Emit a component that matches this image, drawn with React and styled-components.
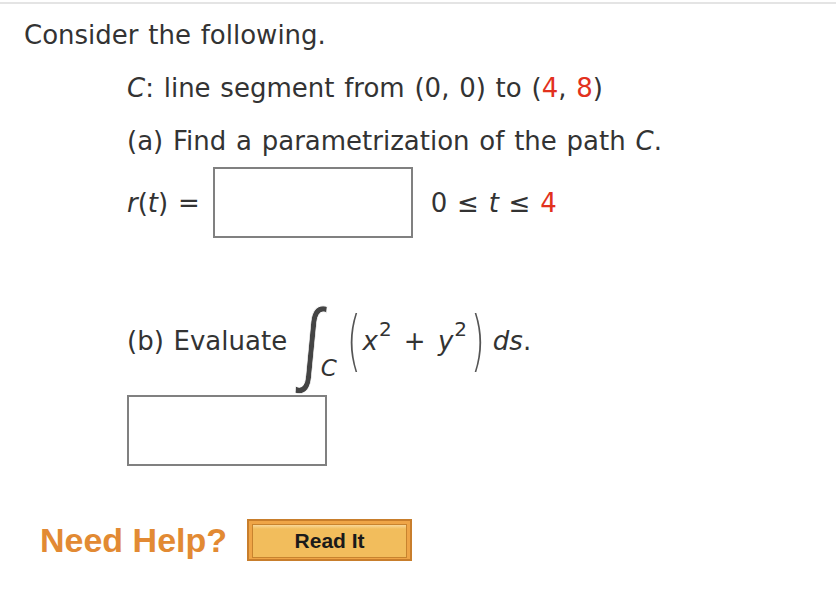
import React from "react"
import styled, { createGlobalStyle } from "styled-components"

const GlobalStyle = createGlobalStyle`
  html, body {
    margin: 0;
    padding: 0;
    background: #fff;
  }
  body {
    font-family: "DejaVu Sans", Verdana, sans-serif;
    color: #333;
  }
`

const Page = styled.div`
  width: 836px;
  height: 606px;
  border-top: 2px solid #e4e4e4;
  margin-top: 2px;
  box-sizing: border-box;
  padding: 16px 0 0 24px;
  font-size: 26px;
  word-spacing: 1.5px;
`

const Intro = styled.div`
  line-height: 30px;
`

const Body = styled.div`
  padding: 0 0 0 103px;
  display: flex;
  flex-direction: column;
  align-items: flex-start;
`

const Line = styled.div`
  line-height: 30px;
  margin-top: ${({ top }) => top}px;
`

const Red = styled.span`
  color: #e2311d;
`

const Var = styled.i`
  font-style: italic;
`

const AnswerRow = styled.div`
  display: flex;
  align-items: center;
  margin-top: 11px;
  gap: 13px;
`

const AnswerBox = styled.div`
  width: 200px;
  height: 71px;
  box-sizing: border-box;
  border: 2px solid #808080;
  background: #fff;
`

const Range = styled.span`
  margin-left: 5px;
`

const EvalRow = styled.div`
  display: flex;
  align-items: center;
  margin-top: 63px;
  height: 80px;
`

const Integral = styled.span`
  display: inline-block;
  font-family: "Liberation Sans", Arial, sans-serif;
  font-size: 64px;
  line-height: 1;
  color: #444;
  -webkit-text-stroke: 0.6px #fff;
  margin: 2px 0 0 16px;
  transform: scale(1, 1.45) skewX(-8deg);
`

const Sub = styled.span`
  align-self: flex-end;
  font-size: 23px;
  line-height: 1;
  margin: 0 8px 1px 0;
`

const Paren = styled.span`
  display: inline-block;
  font-size: 66px;
  font-weight: 200;
  line-height: 1;
  color: #555;
  transform: scaleX(0.55);
  margin: 0 -4px;
`

const Sup = styled.sup`
  font-size: 20px;
  vertical-align: 14px;
  line-height: 0;
  margin-left: 1px;
`

const Expr = styled.span`
  word-spacing: 4px;
  padding-right: 2px;
`

const Tail = styled.span`
  margin-left: 6px;
`

const SecondBox = styled(AnswerBox)`
  margin-top: 14px;
`

const HelpRow = styled.div`
  display: flex;
  align-items: center;
  margin-top: 53px;
  margin-left: 16px;
  gap: 20px;
`

const HelpLabel = styled.span`
  font-family: "Liberation Sans", Arial, sans-serif;
  font-weight: bold;
  font-size: 34px;
  word-spacing: 0;
  color: #e28a33;
`

const ReadButton = styled.button`
  width: 165px;
  height: 42px;
  box-sizing: border-box;
  border: 2px solid #c87e2c;
  background: #efa547;
  padding: 3px;
  cursor: pointer;

  span {
    display: flex;
    align-items: center;
    justify-content: center;
    height: 100%;
    border: 1px solid #c8832e;
    background: linear-gradient(#f8d79a 0, #f2bd5c 4px, #f2bd5c 100%);
    font-family: "Liberation Sans", Arial, sans-serif;
    font-weight: bold;
    font-size: 21px;
    color: #1a1a1a;
  }
`

const App = () => {
  return (
    <>
      <GlobalStyle />
      <Page>
        <Intro>Consider the following.</Intro>
        <Body>
          <Line top={23}>
            <Var>C</Var>: line segment from (0, 0) to (<Red>4</Red>, <Red>8</Red>)
          </Line>
          <Line top={23}>
            (a) Find a parametrization of the path <Var>C</Var>.
          </Line>
          <AnswerRow>
            <span>
              <Var>r</Var>(<Var>t</Var>) =
            </span>
            <AnswerBox />
            <Range>
              0 ≤ <Var>t</Var> ≤ <Red>4</Red>
            </Range>
          </AnswerRow>
          <EvalRow>
            <span>(b) Evaluate</span>
            <Integral>∫</Integral>
            <Sub>
              <Var>C</Var>
            </Sub>
            <Paren>(</Paren>
            <Expr>
              <Var>x</Var>
              <Sup>2</Sup> + <Var>y</Var>
              <Sup>2</Sup>
            </Expr>
            <Paren>)</Paren>
            <Tail>
              <Var>ds</Var>.
            </Tail>
          </EvalRow>
          <SecondBox />
        </Body>
        <HelpRow>
          <HelpLabel>Need Help?</HelpLabel>
          <ReadButton>
            <span>Read It</span>
          </ReadButton>
        </HelpRow>
      </Page>
    </>
  )
}

export default App
